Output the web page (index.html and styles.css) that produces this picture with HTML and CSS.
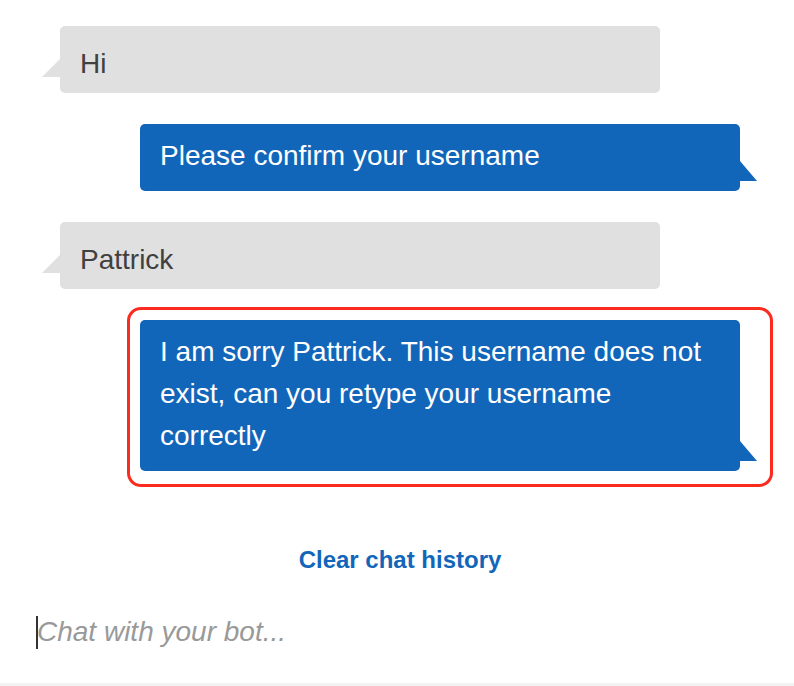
FILE: index.html
```html
<!DOCTYPE html>
<html lang="en">
<head>
<meta charset="utf-8">
<title>Chat with your bot</title>
<link rel="stylesheet" href="styles.css">
</head>
<body>
<div class="app">
  <div class="conversation">
    <div class="messages">
      <div class="bubble bubble-user">Hi</div>
      <div class="bubble bubble-bot">Please confirm your username</div>
      <div class="bubble bubble-user">Pattrick</div>
      <div class="bubble bubble-bot bubble-highlight">I am sorry Pattrick. This username does not exist, can you retype your username correctly</div>
    </div>
    <div class="actions">
      <button class="clear-link" type="button">Clear chat history</button>
    </div>
  </div>
  <div class="composer">
    <div class="field">
      <input class="chat-input" type="text" placeholder="Chat with your bot...">
    </div>
  </div>
  <div class="footer-bar"></div>
</div>
</body>
</html>
```

FILE: styles.css
```css
html, body {
  margin: 0;
  padding: 0;
  background: #ffffff;
  overflow: hidden;
}

body {
  font-family: "Liberation Sans", Arial, Helvetica, sans-serif;
}

.app {
  width: 794px;
  height: 686px;
  display: flex;
  flex-direction: column;
}

.conversation {
  width: 680px;
  margin-left: 60px;
  padding-top: 26px;
}

.messages {
  display: flex;
  flex-direction: column;
  gap: 31px;
}

.bubble {
  position: relative;
  box-sizing: border-box;
  width: 600px;
  font-size: 28px;
  line-height: 42px;
  border-radius: 5px;
}

.bubble::before {
  content: "";
  position: absolute;
  width: 0;
  height: 0;
}

.bubble-user {
  align-self: flex-start;
  background: #e0e0e0;
  color: #404040;
  padding: 17px 20px 8px;
}

.bubble-user::before {
  left: -18px;
  bottom: 16px;
  border-left: 18px solid transparent;
  border-bottom: 18px solid #e0e0e0;
}

.bubble-bot {
  align-self: flex-end;
  background: #1266ba;
  color: #ffffff;
  padding: 11px 20px 14px;
}

.bubble-bot::before {
  right: -17px;
  bottom: 10px;
  border-right: 17px solid transparent;
  border-bottom: 20px solid #1266ba;
}

.bubble-highlight::after {
  content: "";
  position: absolute;
  box-sizing: border-box;
  top: -13px;
  left: -13px;
  right: -33px;
  bottom: -16px;
  border: 3px solid #fb2b20;
  border-radius: 14px;
  pointer-events: none;
}

.actions {
  display: flex;
  justify-content: center;
  padding-top: 75px;
}

.clear-link {
  font-family: "Liberation Sans", Arial, Helvetica, sans-serif;
  font-size: 24px;
  font-weight: 700;
  line-height: 28px;
  color: #1266ba;
  background: none;
  border: none;
  padding: 0;
  margin: 0;
  cursor: pointer;
}

.composer {
  padding: 37px 0 0 37px;
  flex: 1;
}

.field {
  position: relative;
}

.field::before {
  content: "";
  position: absolute;
  left: -1px;
  top: 5px;
  width: 2px;
  height: 33px;
  background: #333333;
}

.chat-input {
  display: block;
  box-sizing: border-box;
  width: 720px;
  height: 42px;
  padding: 0;
  margin: 0;
  border: none;
  outline: none;
  background: transparent;
  font-family: "Liberation Sans", Arial, Helvetica, sans-serif;
  font-size: 28px;
  line-height: 42px;
  color: #333333;
}

.chat-input::placeholder {
  color: #999999;
  font-style: italic;
  opacity: 1;
}

.footer-bar {
  height: 3px;
  background: #f2f2f2;
}
```
